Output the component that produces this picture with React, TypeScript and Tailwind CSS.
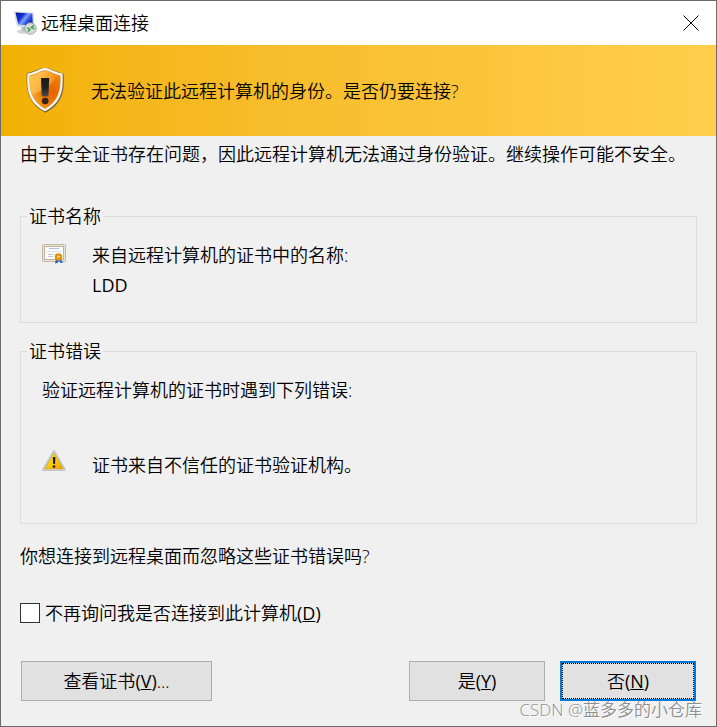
const buttonBase =
  'h-10 bg-[#e1e1e1] text-center focus:outline-none hover:bg-[#e5f1fb]'

function RemoteDesktopIcon() {
  return (
    <svg viewBox="0 0 24 24" className="h-6 w-6" aria-hidden="true">
      <defs>
        <linearGradient id="screen" x1="0" y1="0" x2="1" y2="0.6">
          <stop offset="0" stopColor="#0a1a9c" />
          <stop offset="0.4" stopColor="#1030d8" />
          <stop offset="0.6" stopColor="#7ea2f8" />
          <stop offset="0.8" stopColor="#2c50e0" />
          <stop offset="1" stopColor="#0f2cc4" />
        </linearGradient>
      </defs>
      <ellipse cx="10.500" cy="20.500" rx="6.500" ry="2.300" fill="#d3d6d9" />
      <path d="M8 15l6 1v5l-5-1z" fill="#b9bec3" />
      <path d="M.8 .6l19.700 1 .8 14.400L4 15.500z" fill="#d5dbe5" />
      <path d="M2.500 1.500l16.800 1 .5 12L5.300 13.500z" fill="url(#screen)" />
      <circle cx="17.500" cy="17.500" r="5.800" fill="#d8dad9" stroke="#92979a" strokeWidth="0.8" />
      <path d="M14 16.800l3 1.400-2 2.600M21 14.300l-2.600 2 3 1.600" fill="none" stroke="#29a33d" strokeWidth="1.400" />
    </svg>
  )
}

function CloseIcon() {
  return (
    <svg viewBox="0 0 16 16" className="h-4 w-4" aria-hidden="true">
      <path d="M.5 .5l15 15M15.500 .5l-15 15" fill="none" stroke="#000000" />
    </svg>
  )
}

function ShieldIcon() {
  return (
    <svg viewBox="0 0 40 48" className="h-12 w-10" aria-hidden="true">
      <defs>
        <radialGradient id="shieldFill" cx="0.75" cy="0.55" r="0.7">
          <stop offset="0" stopColor="#e95f00" />
          <stop offset="0.5" stopColor="#f07c08" />
          <stop offset="1" stopColor="#f9a826" />
        </radialGradient>
        <linearGradient id="shieldShine" x1="0" y1="0" x2="1" y2="0.4">
          <stop offset="0" stopColor="#ffc840" />
          <stop offset="0.45" stopColor="#fbb84a" />
          <stop offset="1" stopColor="#f28510" />
        </linearGradient>
        <linearGradient id="mark" x1="0" y1="0" x2="0" y2="1">
          <stop offset="0" stopColor="#1a1a1a" />
          <stop offset="0.55" stopColor="#222222" />
          <stop offset="1" stopColor="#4c4c4c" />
        </linearGradient>
      </defs>
      <path
        d="M20.500 1C15 .5 10 4.500 1.800 6 .8 24 3.500 37 20.500 45.800 37.500 37 40 24 38.500 6.500 31 5.500 26 .8 20.500 1z"
        fill="#7d6535"
      />
      <path
        d="M20 1C15 1 10.500 5.500 2.500 6.500 1.300 24 4 36 20 44.300 36 36 38.700 24 37.500 6.500 29.500 5.500 25 1 20 1z"
        fill="#f7f7f5"
      />
      <path
        d="M20 3.600C15.500 3.600 11.500 7.600 4.800 8.600 4.100 23.500 7 34.500 20 41.700 33 34.500 35.900 23.500 35.200 8.600 28.500 7.600 24.500 3.600 20 3.600z"
        fill="url(#shieldFill)"
        stroke="#c98a2a"
        strokeWidth="0.500"
      />
      <path
        d="M20 4C15.500 4 11.500 8 5 9 4.600 16 5 22 6.500 27.500 13 26 27 20 32 8.300 27.500 7.200 24.500 4 20 4z"
        fill="url(#shieldShine)"
      />
      <path d="M16 11h8.200l-.8 18.500h-6.600z" fill="url(#mark)" />
      <circle cx="20.200" cy="34" r="3.300" fill="#33261a" />
    </svg>
  )
}

function CertificateIcon() {
  return (
    <svg viewBox="0 0 24 20" className="h-5 w-6" aria-hidden="true">
      <rect x="0.500" y="0.500" width="23" height="17" rx="1" fill="#e3d9c8" stroke="#c4b7a4" />
      <rect x="1.500" y="1.500" width="21" height="15" fill="none" stroke="#f4eee3" strokeDasharray="1 1" />
      <rect x="2.500" y="2.500" width="19" height="13" fill="#fdfdfb" stroke="#bfb19c" />
      <path d="M7 4.500h10" stroke="#b3bde0" />
      <path d="M4.500 7.500h15" stroke="#dcdfe6" />
      <path d="M6 10.500h6M6 12.500h5" stroke="#c3c7d2" />
      <path d="M14 14.500l-1 5 3-.8 .8-2.700zM18.500 14.500l2.500 4.500-2.800-.2-1.200-2.800z" fill="#1763e0" />
      <circle cx="16.500" cy="13" r="3.800" fill="#dc960c" />
      <circle cx="16.500" cy="12.800" r="1.300" fill="#ffd668" />
    </svg>
  )
}

function WarningIcon() {
  return (
    <svg viewBox="0 0 24 22" className="h-[22px] w-6" aria-hidden="true">
      <defs>
        <linearGradient id="warn" x1="0" y1="0" x2="0.8" y2="1">
          <stop offset="0" stopColor="#fff03c" />
          <stop offset="0.5" stopColor="#fbd20a" />
          <stop offset="1" stopColor="#f2a900" />
        </linearGradient>
      </defs>
      <path
        d="M12 1.200L1.200 19.800h21.600z"
        fill="#b5b5b5"
        stroke="#b5b5b5"
        strokeWidth="2"
        strokeLinejoin="round"
      />
      <path d="M12 1.500L1.500 19.500h21z" fill="none" stroke="#d6d6d6" strokeLinejoin="round" />
      <path d="M12 3.200L3 18.800h18z" fill="url(#warn)" stroke="#d9a300" strokeWidth="0.600" strokeLinejoin="round" />
      <path d="M10.800 7h2.600l-.4 7h-1.800z" fill="#1c1c2c" />
      <circle cx="12" cy="16.600" r="1.300" fill="#1c1c2c" />
    </svg>
  )
}

// Underlined shortcut letter, e.g. (Y)
function AccessKey({ letter }: { letter: string }) {
  return (
    <span className="font-normal">
      (<u>{letter}</u>)
    </span>
  )
}

export default function App() {
  return (
    <div className="relative flex min-h-screen flex-col border border-[#6b6b6b] bg-[#f0f0f0] font-['Open_Sans','Noto_Sans_CJK_SC',sans-serif] text-[18px] leading-6 font-[350] text-black">
      <header className="flex h-11 items-center bg-white pr-[17px] pl-3">
        <RemoteDesktopIcon />
        <h1 className="ml-1 font-[350]">远程桌面连接</h1>
        <button type="button" aria-label="关闭" className="ml-auto">
          <CloseIcon />
        </button>
      </header>

      <div className="flex h-[91px] items-center gap-[26px] bg-linear-to-r from-[#f2b100] to-[#ffcf4b] pl-6">
        <ShieldIcon />
        <p>无法验证此远程计算机的身份。是否仍要连接?</p>
      </div>

      <main className="flex flex-col px-[19px] pt-1.5 pb-[25px]">
        <p>由于安全证书存在问题，因此远程计算机无法通过身份验证。继续操作可能不安全。</p>

        {/* Certificate name */}
        <fieldset className="mt-[38px] border border-[#dcdcdc] pt-3 pb-[22px] pl-[21px]">
          <legend className="-ml-[15px] px-0.5">证书名称</legend>
          <div className="flex items-start gap-[26px] leading-[30px]">
            <div className="pt-1">
              <CertificateIcon />
            </div>
            <div>
              <p>来自远程计算机的证书中的名称:</p>
              <p className="font-normal">LDD</p>
            </div>
          </div>
        </fieldset>

        {/* Certificate errors */}
        <fieldset className="mt-4 border border-[#dcdcdc] pt-3 pb-[43px] pl-[21px]">
          <legend className="-ml-[15px] px-0.5">证书错误</legend>
          <p className="leading-[30px]">验证远程计算机的证书时遇到下列错误:</p>
          <div className="mt-[45px] flex items-start gap-[26px] leading-[30px]">
            <WarningIcon />
            <p>证书来自不信任的证书验证机构。</p>
          </div>
        </fieldset>

        <p className="mt-5">你想连接到远程桌面而忽略这些证书错误吗?</p>

        <label className="mt-[33px] flex items-center gap-[5px]">
          <input
            type="checkbox"
            className="h-5 w-5 appearance-none border border-[#333333] bg-white checked:bg-[#0078d7]"
          />
          <span>
            不再询问我是否连接到此计算机
            <AccessKey letter="D" />
          </span>
        </label>

        <div className="mt-9 flex gap-[15px] px-px">
          <button type="button" className={`${buttonBase} mr-auto w-[191px] border border-[#adadad]`}>
            查看证书
            <AccessKey letter="V" />
            ...
          </button>
          <button type="button" className={`${buttonBase} w-[136px] border border-[#adadad]`}>
            是
            <AccessKey letter="Y" />
          </button>
          <button type="button" className={`${buttonBase} w-[136px] border-2 border-[#0078d7]`}>
            <span className="flex h-full items-center justify-center border border-dotted border-black">
              否
              <AccessKey letter="N" />
            </span>
          </button>
        </div>
      </main>

      <p className="absolute right-3.5 bottom-1 text-[17px] text-[#8f8f8f] [text-shadow:1px_1px_0_#ffffff]">
        CSDN @蓝多多的小仓库
      </p>
    </div>
  )
}
